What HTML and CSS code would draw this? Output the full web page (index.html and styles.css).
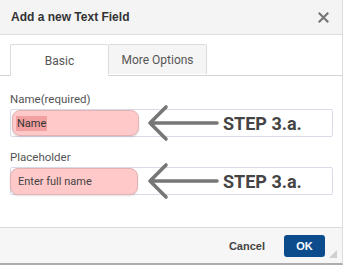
FILE: index.html
```html
<!DOCTYPE html>
<html>
<head>
<meta charset="utf-8">
<link rel="stylesheet" href="styles.css">
</head>
<body>
<div class="dialog">
  <div class="header">
    <span class="title">Add a new Text Field</span>
    <svg class="close" width="11" height="11" viewBox="0 0 11 11"><path d="M1.5 1.5L9.5 9.5M9.5 1.5L1.5 9.5" stroke="#777" stroke-width="2.2" stroke-linecap="square"/></svg>
  </div>
  <div class="tabs">
    <div class="tab active">Basic</div>
    <div class="tab">More Options</div>
  </div>
  <div class="content">
    <div class="field">
      <div class="label">Name(required)</div>
      <div class="row">
        <div class="input">
          <div class="pink first"><span class="sel">Name</span></div>
        </div>
        <div class="note">
          <svg width="72" height="40" viewBox="0 0 72 40"><path d="M3 19H70M19 3L3 19L19 35" fill="none" stroke="#777" stroke-width="3.6" stroke-linecap="round" stroke-linejoin="round"/></svg>
          <span class="step">STEP 3.a.</span>
        </div>
      </div>
    </div>
    <div class="field second">
      <div class="label">Placeholder</div>
      <div class="row">
        <div class="input">
          <div class="pink other">Enter full name</div>
        </div>
        <div class="note">
          <svg width="72" height="40" viewBox="0 0 72 40"><path d="M3 19H70M19 3L3 19L19 35" fill="none" stroke="#777" stroke-width="3.6" stroke-linecap="round" stroke-linejoin="round"/></svg>
          <span class="step">STEP 3.a.</span>
        </div>
      </div>
    </div>
  </div>
  <div class="footer">
    <span class="cancel">Cancel</span>
    <span class="ok">OK</span>
    <span class="grip"></span>
  </div>
</div>
</body>
</html>
```

FILE: styles.css
```css
html, body {
  margin: 0;
  padding: 0;
  background: #fff;
}
.dialog {
  width: 342px;
  height: 263px;
  border-right: 1px solid #dcdcdc;
  border-bottom: 2px solid #adadad;
  display: flex;
  flex-direction: column;
  font-family: Roboto, "Liberation Sans", sans-serif;
  position: relative;
}
.header {
  height: 34px;
  background: #f4f4f4;
  border-bottom: 1px solid #dedede;
  display: flex;
  align-items: center;
  justify-content: space-between;
  padding: 0 13px 0 11px;
}
.title {
  font-family: "Liberation Sans", Arial, sans-serif;
  font-weight: bold;
  font-size: 12px;
  color: #333;
}
.close {
  display: block;
}
.tabs {
  display: flex;
  padding: 9px 0 0 10px;
  border-bottom: 1px solid #d4d4d4;
  height: 31px;
}
.tab {
  width: 97px;
  height: 29px;
  border: 1px solid #dcdcdc;
  border-bottom: none;
  background: #f5f5f5;
  font-size: 12px;
  color: #555;
  display: flex;
  align-items: center;
  justify-content: center;
  border-radius: 2px 2px 0 0;
}
.tab.active {
  background: #fff;
  height: 31px;
  margin-bottom: -1px;
  border-right: none;
}
.content {
  padding: 17px 9px 0 10px;
  flex: 1;
}
.label {
  font-size: 11.5px;
  color: #555;
  line-height: 13px;
  height: 16px;
}
.field.second {
  margin-top: 14px;
}
.row {
  position: relative;
}
.input {
  height: 26px;
  border: 1px solid #d8dbe8;
  border-radius: 2px;
  display: flex;
  align-items: center;
}
.pink {
  background: #ffc9c9;
  border: 1px solid #e3b3b3;
  border-radius: 8px;
  box-shadow: 0 1px 2px rgba(0,0,0,0.12);
  font-size: 11px;
  color: #333;
  display: flex;
  align-items: center;
  box-sizing: border-box;
}
.pink.first {
  width: 127px;
  height: 26px;
  margin-left: 1px;
  padding-left: 3px;
}
.pink.other {
  width: 128px;
  height: 27px;
  margin-left: -1px;
  padding-left: 7px;
  color: #444;
}
.sel {
  background: #f3a0a0;
  padding: 1px 1px;
  color: #333;
}
.note {
  position: absolute;
  left: 137px;
  top: -5px;
  display: flex;
  align-items: center;
  height: 40px;
}
.note svg {
  display: block;
}
.step {
  font-family: Roboto, "Liberation Sans", sans-serif;
  font-weight: bold;
  font-size: 18px;
  color: #444;
  margin-left: 4px;
  margin-top: -1px;
}
.footer {
  height: 35px;
  border-top: 1px solid #d8d8d8;
  background: #f6f6f6;
  display: flex;
  align-items: center;
  justify-content: flex-end;
  padding-right: 17px;
  position: relative;
}
.cancel {
  font-family: "Liberation Sans", Arial, sans-serif;
  font-weight: bold;
  font-size: 11px;
  color: #444;
  margin-right: 19px;
}
.ok {
  width: 41px;
  height: 22px;
  background: #0d4c8c;
  border-radius: 3px;
  color: #fff;
  font-family: "Liberation Sans", Arial, sans-serif;
  font-weight: bold;
  font-size: 11px;
  display: flex;
  align-items: center;
  justify-content: center;
}
.grip {
  position: absolute;
  right: 5px;
  bottom: 5px;
  width: 0;
  height: 0;
  border-left: 8px solid transparent;
  border-bottom: 8px solid #cfcfcf;
}
```
